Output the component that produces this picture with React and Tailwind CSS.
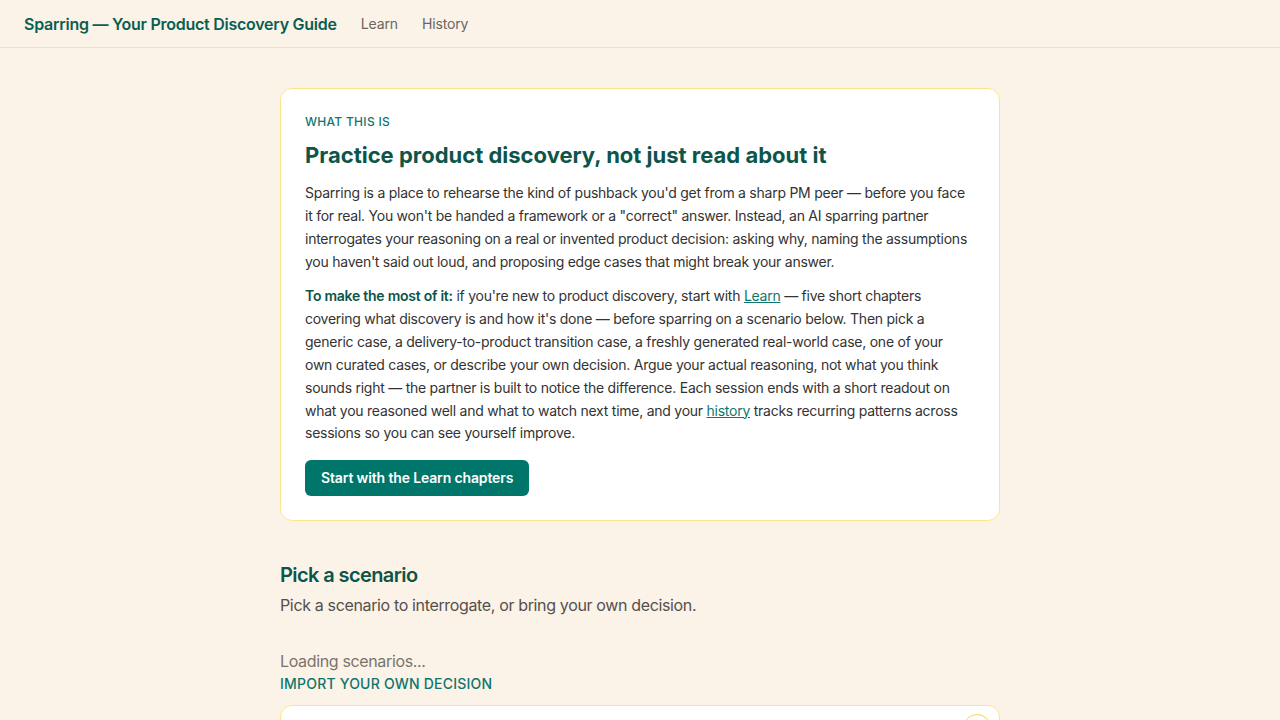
import { useState } from 'react';

const FONT = { fontFamily: 'Inter, "Noto Sans", sans-serif' };

function Header() {
  return (
    <header className="flex h-12 items-center gap-6 border-b border-[#fde68a] px-6">
      <a href="#" className="text-base font-semibold tracking-[-0.016em] text-[#0b5e52]">Sparring — Your Product Discovery Guide</a>
      <nav className="flex items-center gap-6 text-sm tracking-[-0.01em] text-[#6b6560]">
        <a href="#">Learn</a>
        <a href="#">History</a>
      </nav>
    </header>
  );
}

function Intro() {
  return (
    <section className="rounded-xl border border-[#fde68a] bg-white px-6 pt-[25px] pb-6">
      <p className="text-xs font-medium uppercase tracking-wide text-[#0f766e]">What this is</p>
      <h1 className="mt-[11px] text-[22px] font-bold leading-7 text-[#0d5449]">Practice product discovery, not just read about it</h1>
      <p className="mt-[13px] text-sm leading-[22.85px] tracking-[-0.018em] text-[#333]">
        Sparring is a place to rehearse the kind of pushback you'd get from a sharp PM peer — before you face<br />
        it for real. You won't be handed a framework or a "correct" answer. Instead, an AI sparring partner<br />
        interrogates your reasoning on a real or invented product decision: asking why, naming the assumptions<br />
        you haven't said out loud, and proposing edge cases that might break your answer.
      </p>
      <p className="mt-3 text-sm leading-[22.85px] tracking-[-0.018em] text-[#333]">
        <strong className="font-semibold text-[#0d5449]">To make the most of it:</strong> if you're new to product discovery, start with{' '}
        <a href="#" className="text-[#0f766e] underline">Learn</a> — five short chapters<br />
        covering what discovery is and how it's done — before sparring on a scenario below. Then pick a<br />
        generic case, a delivery-to-product transition case, a freshly generated real-world case, one of your<br />
        own curated cases, or describe your own decision. Argue your actual reasoning, not what you think<br />
        sounds right — the partner is built to notice the difference. Each session ends with a short readout on<br />
        what you reasoned well and what to watch next time, and your{' '}
        <a href="#" className="text-[#0f766e] underline">history</a> tracks recurring patterns across<br />
        sessions so you can see yourself improve.
      </p>
      <button className="mt-[15px] h-9 rounded-md bg-[#00766b] px-4 text-sm font-semibold tracking-[-0.01em] text-white">
        Start with the Learn chapters
      </button>
    </section>
  );
}

export default function App() {
  const [loading] = useState(true);
  return (
    <div className="min-h-screen bg-[#fbf3e8] text-[#333]" style={FONT}>
      <Header />
      <main className="mx-auto w-[720px] pt-10 pb-16">
        <Intro />

        <section className="mt-10">
          <h2 className="text-xl font-semibold tracking-[-0.03em] text-[#0d5449]">Pick a scenario</h2>
          <p className="mt-1 text-base tracking-[-0.022em] text-[#55504b]">Pick a scenario to interrogate, or bring your own decision.</p>

          {loading && <p className="mt-8 text-base tracking-[-0.022em] text-[#7a736c]">Loading scenarios...</p>}

          <p className="mt-px text-sm font-medium uppercase tracking-[0.015em] text-[#0f766e]">Import your own decision</p>
          <div className="mt-[11px] flex h-24 justify-end rounded-xl border border-[#fde68a] bg-white p-2">
            <span className="h-7 w-7 rounded-full border border-[#fcd34d]" />
          </div>
        </section>
      </main>
    </div>
  );
}
